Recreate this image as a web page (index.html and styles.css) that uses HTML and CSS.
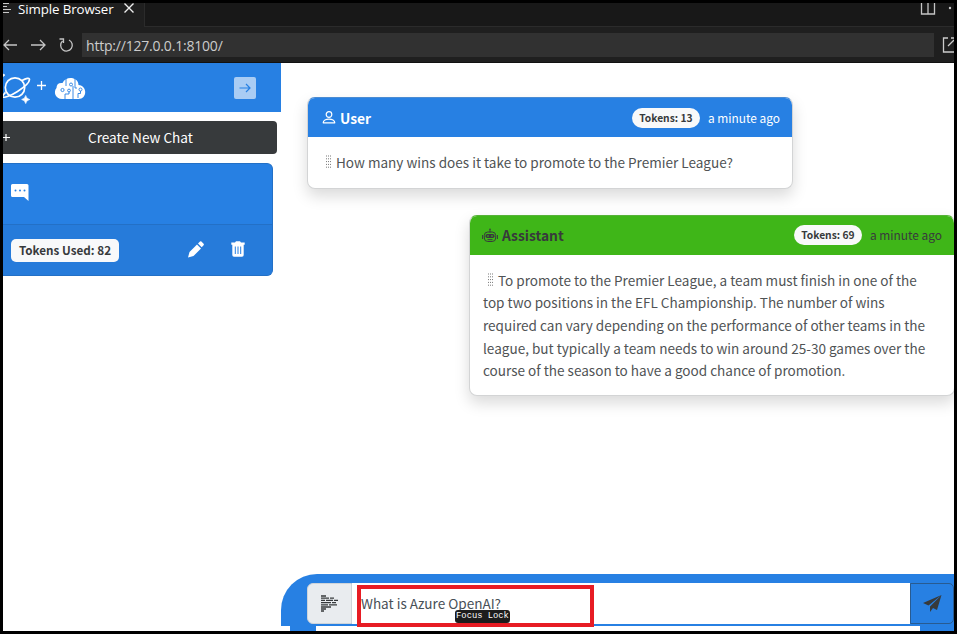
FILE: index.html
```html
<!DOCTYPE html>
<html lang="en">
<head>
<meta charset="utf-8">
<title>Simple Browser</title>
<link rel="stylesheet" href="styles.css">
</head>
<body>
<div class="window">
  <div class="tabs">
    <div class="tab">
      <svg class="tab-list" width="10" height="12" viewBox="0 0 10 12"><path d="M0 .5h7M0 3.500h5M0 6.500h9M0 9.500h7" stroke="#c8c8c8" fill="none"/></svg>
      <span class="tab-title">Simple Browser</span>
      <svg class="tab-close" width="12" height="12" viewBox="0 0 12 12"><path d="M1.500 .500l9 9M10.500 .500l-9 9" stroke="#eee" stroke-width="1.400" fill="none"/></svg>
    </div>
    <div class="tab-actions">
      <svg width="34" height="14" viewBox="0 0 34 14"><path d="M1.500 0v11h13V0M8 0v11" stroke="#c5c5c5" stroke-width="1.300" fill="none"/><circle cx="30" cy="5" r="1.200" fill="#ccc"/></svg>
    </div>
  </div>
  <div class="toolbar">
    <svg class="nav" width="73" height="18" viewBox="0 0 73 18"><g stroke="#c5c5c5" stroke-width="1.300" fill="none"><path d="M14 9H1M6 4L1 9l5 5M28 9h14M37 4l5 5-5 5"/><path d="M66 4a5.800 5.800 0 1 1-6.500 1M56.500 3h4v4"/></g></svg>
    <div class="url">http://127.0.0.1:8100/</div>
    <svg class="popout" width="12" height="18" viewBox="0 0 12 18"><path d="M6 2H1.500v14H12M9 2h3M6 10l6-6" stroke="#ccc" stroke-width="1.300" fill="none"/></svg>
  </div>
  <div class="app">
    <aside class="side">
      <header class="brand">
        <svg class="logos" width="86" height="36" viewBox="0 0 86 36">
          <g fill="none" stroke="#fff" stroke-width="1.700"><circle cx="12" cy="17.500" r="9.700"/><path d="M19 10.500c4-2.200 7.500-2.900 7.500-1 0 2.500-5 7.500-12 12S1 28 0 27c-.5-.6.500-2.700 2.500-4.700"/></g>
          <path d="M22.700 25.500q.6 3.400 4 4-3.400.6-4 4-.6-3.400-4-4 3.400-.6 4-4M0 4l2 1-2 1.500z" fill="#fff" stroke="#fff" stroke-width=".7"/>
          <path d="M34 15.500h9M38.500 11v9" stroke="#fff" stroke-width="1.300"/>
          <path d="M59 29h16.500c9 0 9-13.500 0-14 0-8-12.500-10-16-2-4-.5-6 1.500-6 5-3.500 4-1 11 5.500 11z" fill="#fff"/>
          <g fill="none" stroke="#2780e3" stroke-width=".9"><path d="M63 7v9M62 29v-5h4v-2M70 29V16M75 28v-4.500h2.500V21M72 8v10h2"/><circle cx="59.500" cy="20" r="1.600"/><circle cx="66" cy="20.500" r="1.400"/><circle cx="68" cy="14.500" r="1.500"/><circle cx="77.500" cy="19.500" r="1.500"/></g>
        </svg>
        <span class="collapse"><svg width="12" height="12" viewBox="0 0 12 12"><path d="M.5 6h10.500M7 2l4 4-4 4" stroke="#2780e3" stroke-width="1.200" fill="none"/></svg></span>
      </header>
      <div class="create"><svg width="7" height="8" viewBox="0 0 7 8"><path d="M0 3.500h7M3 0v7" stroke="#fff" stroke-width="1.200"/></svg><span>Create New Chat</span></div>
      <section class="chat">
        <div class="chat-top"><svg width="18" height="18" viewBox="0 0 18 18"><path d="M1.500 0H16q1.500 0 1.500 1.500V17L13 13H1.500Q0 13 0 11.500v-10Q0 0 1.500 0z" fill="#fff"/><g fill="#2780e3"><circle cx="4.500" cy="6.500" r="1"/><circle cx="9" cy="6.500" r="1"/><circle cx="13.500" cy="6.500" r="1"/></g></svg></div>
        <div class="chat-foot">
          <span class="used">Tokens Used: 82</span>
          <svg class="pencil" width="16" height="17" viewBox="0 0 16 17"><path d="M0 16.500l1.500-5.500 7.500-7.500 4 4-7.500 7.500zM10 2.500L12 .600q.7-.6 1.400 0l2.200 2.200q.6.700 0 1.400l-1.900 2z" fill="#fff"/></svg>
          <svg class="trash" width="14" height="16" viewBox="0 0 14 16"><path d="M.3 1.500H4L5 .3h4l1 1.200h3.700v2.300H.3zM1.300 3.600h11.400V14q0 1.700-1.700 1.700H3Q1.300 15.700 1.300 14z" fill="#fff"/><path d="M4.300 5.500v7.500M7 5.500v7.500M9.700 5.500v7.500" stroke="#2780e3" stroke-width="1"/></svg>
        </div>
      </section>
    </aside>
    <main class="main">
      <article class="msg user">
        <header><svg width="14" height="14" viewBox="0 0 14 14"><g fill="none" stroke="#fff" stroke-width="1.200"><circle cx="7" cy="3.500" r="2.800"/><path d="M1.200 11.800c0-5 11.600-5 11.600 0z" stroke-linejoin="round"/></g></svg><b class="name">User</b><span class="pill">Tokens: 13</span><time>a minute ago</time></header>
        <div class="body"><p><svg class="grip" width="7" height="15" viewBox="0 0 7 15"><path d="M1.500 .5v14M3.500 .5v14M5.500 .5v14" stroke="#777" stroke-width="1" stroke-dasharray="1 1.800"/></svg><span>How many wins does it take to promote to the Premier League?</span></p></div>
      </article>
      <article class="msg bot">
        <header><svg width="16" height="16" viewBox="0 0 16 16"><g fill="none" stroke="#373a3c" stroke-width="1"><path d="M8 1.500v3"/><rect x="2.300" y="4" width="11.400" height="9.500" rx="3.500"/><path d="M.6 7v4M15.400 7v4M5.500 11.700h5"/></g><circle cx="8" cy="1.200" r=".8" fill="#373a3c"/><rect x="3.500" y="6" width="9" height="4" rx="1.800" fill="#373a3c"/><path d="M5 8h2M9 8h2" stroke="#3fb618"/></svg><b class="name">Assistant</b><span class="pill">Tokens: 69</span><time>a minute ago</time></header>
        <div class="body">
          <p><svg class="grip" width="7" height="15" viewBox="0 0 7 15"><path d="M1.500 .5v14M3.500 .5v14M5.500 .5v14" stroke="#777" stroke-width="1" stroke-dasharray="1 1.800"/></svg><span>To promote to the Premier League, a team must finish in one of the</span></p>
          <p><span>top two positions in the EFL Championship. The number of wins</span></p>
          <p><span>required can vary depending on the performance of other teams in the</span></p>
          <p><span>league, but typically a team needs to win around 25-30 games over the</span></p>
          <p><span>course of the season to have a good chance of promotion.</span></p>
        </div>
      </article>
      <div class="composer">
        <div class="row">
          <span class="prefix"><svg width="18" height="17" viewBox="0 0 18 17"><path d="M0 1h5M0 3.200h8m1 0h4M0 5.400h4m1 0h7m1 0h4M0 7.600h10m1 0h4M0 9.800h7m1 0h8M0 12h10M0 14h5M0 16h3" stroke="#373a3c" stroke-width="1.300"/></svg></span>
          <div class="input"><span>What is Azure OpenAI?</span></div>
          <span class="send"><svg width="19" height="17" viewBox="0 0 19 17"><path d="M18.500 0L0 8l5.500 2.500zM18.500 0L7 11.500v5.500l3-4 4 2z" fill="#373a3c"/></svg></span>
        </div>
        <div class="under"></div>
        <div class="highlight"></div>
        <div class="tip">Focus Lock</div>
      </div>
    </main>
  </div>
</div>
</body>
</html>
```
FILE: styles.css
```css
* { box-sizing: border-box; }
body { margin: 0; background: #000; color: #373a3c; font-family: "Noto Sans CJK SC", "Open Sans", sans-serif; font-size: 14px; white-space: nowrap; }
svg { display: block; flex: none; }
p { margin: 0; }
.window { width: 957px; height: 634px; border: 3px solid #000; display: flex; flex-direction: column; overflow: hidden; }
.tabs { height: 24px; flex: none; display: flex; justify-content: space-between; background: #181818; font-family: "Open Sans", sans-serif; color: #fff; }
.tab { width: 142px; height: 24px; display: flex; align-items: flex-start; background: #1f1f1f; border-right: 1px solid #2b2b2b; }
.tab-list { margin-left: -1px; }
.tab-title { width: 97px; margin: -4px 8px 0 6px; font-size: 13.300px; line-height: 20px; letter-spacing: -.1px; }
.tab-actions { flex: 1; display: flex; justify-content: flex-end; border-bottom: 1px solid #2b2b2b; }
.toolbar { height: 36px; flex: none; display: flex; align-items: center; background: #1f1f1f; border-bottom: 1px solid #111; }
.nav { margin-right: 6px; }
.url { width: 852px; height: 24px; padding-left: 4px; background: #313131; color: #ccc; font: 14px/25px "Open Sans", sans-serif; letter-spacing: -.2px; }
.popout { margin-left: 8px; }
.app { flex: 1; min-height: 0; display: flex; background: #fff; }
.side { width: 278px; flex: none; }
.brand { height: 49px; background: #2780e3; display: flex; justify-content: space-between; align-items: center; padding-right: 25px; }
.collapse { width: 22px; height: 22px; border-radius: 2px; background: #a9ccf4; display: flex; align-items: center; justify-content: center; }
.create { width: 274px; height: 33px; margin-top: 9px; background: #373a3c; border-radius: 0 4px 4px 0; color: #fff; display: flex; align-items: center; font-size: 13.600px; }
.create span { margin-left: 78px; line-height: 33px; }
.chat { width: 270px; height: 113px; margin-top: 9px; border: 1px solid #2370c6; border-left: 0; border-radius: 0 6px 6px 0; background: #2780e3; overflow: hidden; }
.chat-top { height: 60px; padding: 20px 0 0 8px; }
.chat-foot { height: 51px; border-top: 1px solid #2370c6; background: #267bda; padding-left: 8px; display: flex; align-items: center; }
.used { width: 108px; height: 23px; border-radius: 5px; background: #f8f9fa; text-align: center; font-weight: 700; font-size: 11.700px; line-height: 22px; }
.pencil { margin: -2px 27px 0 69px; }
.trash { margin-top: -3px; }
.main { flex: 1; min-width: 0; display: flex; flex-direction: column; }
.msg { width: 486px; border: 1px solid #d3d4d5; border-radius: 8px; background: #fff; box-shadow: 0 7px 15px rgba(0,0,0,.15); overflow: hidden; flex: none; }
.msg.user { margin: 34px 0 0 26px; height: 92px; border-top-color: #4a8bd2; }
.msg.bot { margin: 26px 0 0 188px; height: 181px; border-top-color: #56b238; }
.msg header { height: 39px; padding: 0 12px 0 14px; display: flex; align-items: center; background: #2780e3; color: #fff; }
.msg.bot header { background: #3fb618; color: #373a3c; padding-left: 12px; }
.name { font-size: 13.800px; margin-left: 4px; }
.bot .name, .bot .pill, .bot time { position: relative; top: -1px; }
.pill { width: 68px; height: 20px; margin-left: auto; border-radius: 10px; background: #f8f9fa; color: #373a3c; text-align: center; font-weight: 700; font-size: 10.250px; line-height: 20px; }
time { margin-left: 8px; font-size: 11.900px; }
.body { padding: 13.500px 13px; font-size: 13.550px; line-height: 22.700px; color: #505355; }
.body p { height: 22.700px; display: flex; align-items: center; }
.body .grip { margin: 1px 4px 0; }
.composer { position: relative; width: 673px; height: 57px; margin-top: auto; border-radius: 36px 0 0 0; background: #2780e3; padding: 9px 0 0 26px; }
.row { height: 41px; display: flex; }
.prefix { width: 45px; background: #e9ecef; border: 1px solid #ced4da; border-radius: 6px 0 0 6px; display: flex; align-items: center; padding-left: 13px; }
.input { flex: 1; background: #fff; padding-left: 9px; line-height: 40px; color: #495057; font-size: 13.550px; }
.send { width: 44px; border: 1px solid #285b91; border-radius: 0 5px 5px 0; display: flex; align-items: center; justify-content: center; }
.under { height: 5px; margin: 2px 34px 0 9px; background: #fff; }
.composer::after { content: ""; position: absolute; left: 0; bottom: 0; width: 9px; height: 5px; background: #fff; }
.highlight { position: absolute; left: 76px; top: 11px; width: 237px; height: 42px; border: 4px solid #e71c24; }
.tip { position: absolute; left: 174px; top: 36px; width: 55px; height: 13px; border-radius: 3px; background: #1d1d1d; color: #fff; text-align: center; font: 8.800px/13px "Liberation Mono", monospace; }
```
